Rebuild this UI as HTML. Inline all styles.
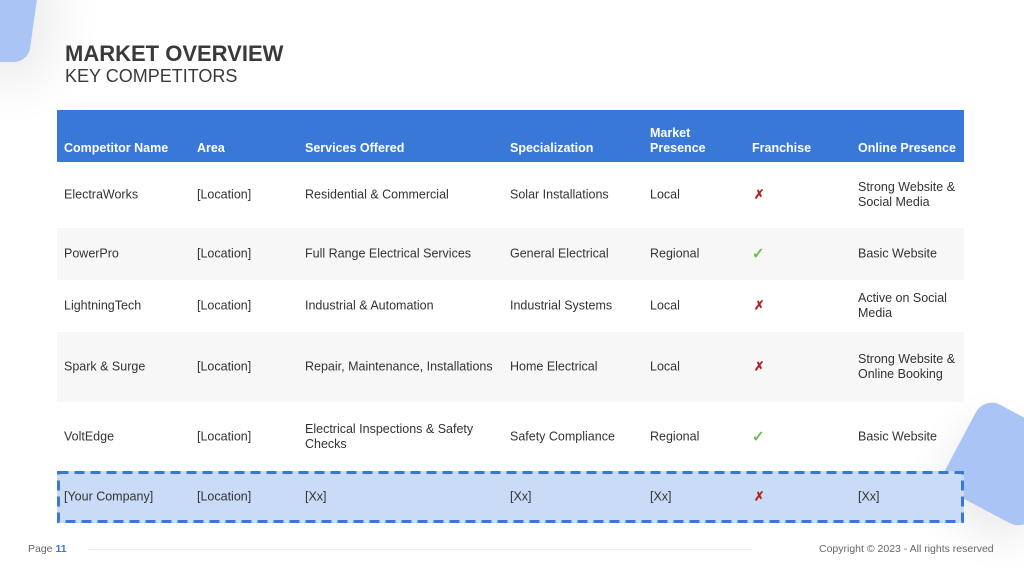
<!DOCTYPE html>
<html><head><style>
body{margin:0;width:1024px;height:576px;position:relative;overflow:hidden;background:#fff;font-family:"Liberation Sans",sans-serif;color:#333}
.blob1{position:absolute;left:-40px;top:-50px;width:76px;height:112px;background:#a9c4f5;border-radius:14px;transform:skewX(-8deg);box-shadow:20px 20px 50px rgba(0,0,0,0.08)}
.blob2{position:absolute;left:955px;top:414px;width:100px;height:100px;background:#a9c4f5;border-radius:18px;transform:rotate(28deg);box-shadow:0 20px 40px rgba(0,0,0,0.08)}
h1{position:absolute;left:65px;top:41px;margin:0;font-size:22px;font-weight:bold;color:#3a3a3a}
h2{position:absolute;left:65px;top:66px;margin:0;font-size:18px;font-weight:normal;color:#3a3a3a}
.row{position:absolute;left:57px;width:907px;font-size:12.5px;color:#333}
.row span{position:absolute;top:50%;transform:translateY(-50%);line-height:15px}
.hd{background:#3a78d8;color:#fff;font-weight:bold}
.hd span{top:auto;transform:none;bottom:6px}
.g{background:#f7f7f7}
.x{color:#b22222;font-weight:bold}
.c{color:#6cc04a;font-weight:bold;font-size:15px}
.yc{background:#c9dbf7}
.foot{position:absolute;top:543px;font-size:10.5px;color:#666}
</style></head><body>
<div class="blob1"></div><div class="blob2"></div>
<h1>MARKET OVERVIEW</h1><h2>KEY COMPETITORS</h2>
<div class="row hd" style="top:110px;height:52px">
<span style="left:7px">Competitor Name</span><span style="left:140px">Area</span><span style="left:248px">Services Offered</span><span style="left:453px">Specialization</span><span style="left:593px">Market<br>Presence</span><span style="left:695px">Franchise</span><span style="left:801px">Online Presence</span></div>
<div class="row" style="top:162px;height:66px">
<span style="left:7px">ElectraWorks</span><span style="left:140px">[Location]</span><span style="left:248px">Residential &amp; Commercial</span><span style="left:453px">Solar Installations</span><span style="left:593px">Local</span><span class="x" style="left:697px">✗</span><span style="left:801px">Strong Website &amp;<br>Social Media</span></div>
<div class="row g" style="top:228px;height:52px">
<span style="left:7px">PowerPro</span><span style="left:140px">[Location]</span><span style="left:248px">Full Range Electrical Services</span><span style="left:453px">General Electrical</span><span style="left:593px">Regional</span><span class="c" style="left:695px">✓</span><span style="left:801px">Basic Website</span></div>
<div class="row" style="top:280px;height:52px">
<span style="left:7px">LightningTech</span><span style="left:140px">[Location]</span><span style="left:248px">Industrial &amp; Automation</span><span style="left:453px">Industrial Systems</span><span style="left:593px">Local</span><span class="x" style="left:697px">✗</span><span style="left:801px">Active on Social<br>Media</span></div>
<div class="row g" style="top:332px;height:70px">
<span style="left:7px">Spark &amp; Surge</span><span style="left:140px">[Location]</span><span style="left:248px">Repair, Maintenance, Installations</span><span style="left:453px">Home Electrical</span><span style="left:593px">Local</span><span class="x" style="left:697px">✗</span><span style="left:801px">Strong Website &amp;<br>Online Booking</span></div>
<div class="row" style="top:402px;height:70px">
<span style="left:7px">VoltEdge</span><span style="left:140px">[Location]</span><span style="left:248px">Electrical Inspections &amp; Safety<br>Checks</span><span style="left:453px">Safety Compliance</span><span style="left:593px">Regional</span><span class="c" style="left:695px">✓</span><span style="left:801px">Basic Website</span></div>
<div class="row yc" style="top:471px;height:52px">
<svg style="position:absolute;left:0;top:0" width="907" height="52"><rect x="1.5" y="1.5" width="904" height="49" fill="none" stroke="#3a78d8" stroke-width="3" stroke-dasharray="10 6"/></svg>
<span style="left:7px">[Your Company]</span><span style="left:140px">[Location]</span><span style="left:248px">[Xx]</span><span style="left:453px">[Xx]</span><span style="left:593px">[Xx]</span><span class="x" style="left:697px">✗</span><span style="left:801px">[Xx]</span></div>
<div class="foot" style="left:28px">Page <b style="color:#3a78d8">11</b></div>
<div style="position:absolute;left:88px;top:549px;width:664px;height:1px;background:#e8eef8"></div>
<div class="foot" style="left:819px">Copyright © 2023 - All rights reserved</div>
</body></html>
